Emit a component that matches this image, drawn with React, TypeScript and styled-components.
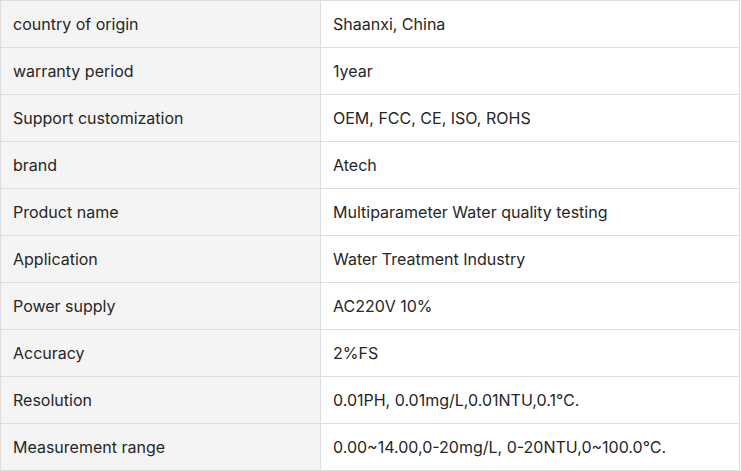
import React from "react";
import styled, { createGlobalStyle } from "styled-components";

const Global = createGlobalStyle`
  html, body { margin: 0; padding: 0; background: #fff; }
  body { font-family: Inter, "Noto Sans", sans-serif; }
`;

const Table = styled.table`
  width: 740px;
  border-collapse: collapse;
  table-layout: fixed;
  font-family: Inter, sans-serif;
  font-size: 16px;
  color: #262626;
`;

const Cell = styled.td<{ $label?: boolean }>`
  height: 47px;
  padding: 0 12px;
  border: 1px solid #dddddd;
  background: ${(p) => (p.$label ? "#f4f4f4" : "#ffffff")};
  width: ${(p) => (p.$label ? "320px" : "auto")};
  vertical-align: middle;
  white-space: nowrap;
  box-sizing: border-box;
`;

const rows: [string, string][] = [
  ["country of origin", "Shaanxi, China"],
  ["warranty period", "1year"],
  ["Support customization", "OEM, FCC, CE, ISO, ROHS"],
  ["brand", "Atech"],
  ["Product name", "Multiparameter Water quality testing"],
  ["Application", "Water Treatment Industry"],
  ["Power supply", "AC220V 10%"],
  ["Accuracy", "2%FS"],
  ["Resolution", "0.01PH, 0.01mg/L,0.01NTU,0.1℃."],
  ["Measurement range", "0.00~14.00,0-20mg/L, 0-20NTU,0~100.0℃."],
];

export default function App() {
  return (
    <>
      <Global />
      <Table>
        <tbody>
          {rows.map(([k, v]) => (
            <tr key={k}>
              <Cell $label>{k}</Cell>
              <Cell>{v}</Cell>
            </tr>
          ))}
        </tbody>
      </Table>
    </>
  );
}
